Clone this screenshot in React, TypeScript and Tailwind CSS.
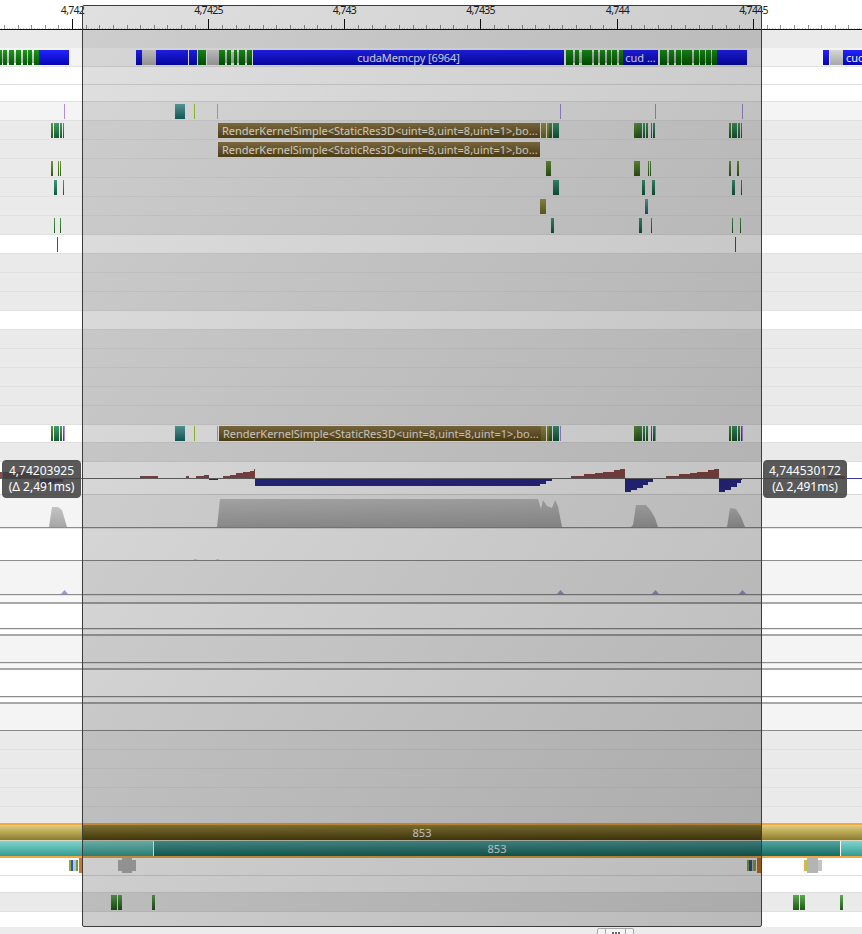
import type { ReactElement, ReactNode } from "react";

const font = "font-['Noto_Sans','DejaVu_Sans',sans-serif]";

type Seg = [number, number, string];
const G = "bg-linear-to-b from-[#1c961c] to-[#005c00]";
const B = "bg-linear-to-b from-[#2222ff] to-[#0505b4]";
const Y = "bg-linear-to-b from-[#d6d6d6] to-[#a8a8a8]";
const DG = "bg-linear-to-b from-[#4f9a4f] to-[#1f5a1f]";
const LG = "bg-linear-to-b from-[#5fa855] to-[#1f5a14]";
const OG = "bg-linear-to-b from-[#6f9a3c] to-[#2f5a14]";
const TL = "bg-linear-to-b from-[#3f9a7c] to-[#0d5a3a]";
const OL = "bg-linear-to-b from-[#a09a4c] to-[#6a6a1e]";
const TQ = "bg-linear-to-b from-[#5fa9a9] to-[#0f6666]";
const LM = "bg-[#a6cf3c]";
const PU = "bg-[#a98fdc]";

function greens(ranges: [number, number][]): Seg[] {
  return ranges.map(([a, b]) => [a, b - a, G] as Seg);
}

const topBar: Seg[] = [
  ...greens([[0, 2], [3, 7], [9, 14], [16, 21], [23, 27], [28, 32], [34, 39]]),
  [39, 30, B],
  [136, 6, B], [142, 14, Y], [156, 32, B], [189, 8, B],
  ...greens([[198, 206], [219, 225], [227, 231], [234, 237], [239, 245], [247, 252]]),
  [207, 12, Y],
  [253, 311, B],
  ...greens([[566, 573], [575, 579], [582, 587], [587, 592], [594, 598], [600, 605], [607, 611], [612, 617], [619, 623]]),
  [623, 35, B],
  ...greens([[660, 667], [669, 674], [676, 681], [682, 692], [694, 699], [700, 705], [706, 711], [712, 717]]),
  [717, 30, B],
  [823, 6, B], [830, 14, Y], [843, 19, B],
];

const burst = (x: number): Seg[] => [
  [x, 2, DG], [x + 3, 2, DG], [x + 5, 1, TL], [x + 6, 2, TL], [x + 9, 2, DG], [x + 12, 1, TL],
];

const burstB: Seg[] = [
  [634, 3, OG], [637, 1, TL], [638, 4, DG], [643, 2, TL], [646, 2, DG], [651, 1, DG], [653, 2, TL],
];

const row121: Seg[] = [
  ...burst(51),
  [541, 5, OL], [547, 2, OL], [549, 3, DG], [553, 6, TL],
  ...burstB,
  ...burst(729),
];

type Row = { h: number; bg: string; line: string; items?: Seg[]; label?: boolean };
const E = "bg-[#eaeaea]";
const F = "bg-[#f4f4f4]";
const W = "bg-white";
const L = "border-[#e0e0e0]";

const rows: Row[] = [
  { h: 18, bg: E, line: "border-[#eaeaea]" },
  { h: 19, bg: F, line: L, items: topBar },
  { h: 18, bg: W, line: L },
  { h: 17, bg: W, line: L },
  { h: 19, bg: F, line: L, items: [[64, 1, PU], [175, 10, TQ], [194, 1, LM], [217, 1, LM], [560, 1, PU], [655, 1, PU], [742, 1, PU]] },
  { h: 19, bg: E, line: L, items: row121, label: true },
  { h: 19, bg: E, line: L, label: true },
  { h: 19, bg: E, line: L, items: [[51, 2, OG], [58, 1, OG], [60, 1, OG], [546, 5, OG], [634, 6, OG], [648, 1, OG], [650, 1, DG], [729, 2, OG], [737, 2, OG]] },
  { h: 19, bg: E, line: L, items: [[54, 3, TL], [63, 1, TL], [553, 6, TL], [642, 3, TL], [652, 3, TL], [732, 3, TL], [741, 1, TL]] },
  { h: 19, bg: E, line: L, items: [[540, 6, OL], [645, 3, TQ]] },
  { h: 19, bg: E, line: L, items: [[54, 1, DG], [60, 1, DG], [551, 3, TL], [639, 3, TL], [651, 1, DG], [732, 1, DG], [740, 1, DG]] },
  { h: 19, bg: W, line: L, items: [[57, 1, "bg-[#2f5f5f]"], [735, 1, "bg-[#2f5f5f]"]] },
  { h: 19, bg: E, line: L },
  { h: 19, bg: E, line: L },
  { h: 19, bg: E, line: L },
  { h: 19, bg: W, line: L },
  { h: 19, bg: E, line: L },
  { h: 19, bg: E, line: L },
  { h: 19, bg: E, line: L },
  { h: 19, bg: E, line: L },
  { h: 19, bg: E, line: L },
];

const lowerEventRow: Seg[] = [...row121, [64, 1, PU], [560, 1, PU], [655, 1, PU], [742, 1, PU], [175, 10, TQ], [194, 1, LM], [217, 1, LM]];

function Items({ items, top = "top-[2px]" }: { items: Seg[]; top?: string }) {
  return (
    <>
      {items.map(([x, w, c], i) => (
        <div key={i} className={`absolute h-[15px] ${top} ${c}`} style={{ left: x, width: w }} />
      ))}
    </>
  );
}

function Kernel({ left = 218, top = "top-[2px]" }: { left?: number; top?: string }) {
  return (
    <div
      className={`absolute flex h-[15px] w-[322px] items-center overflow-hidden whitespace-nowrap bg-linear-to-b from-[#917a48] to-[#5a4818] pl-[4px] text-[11px] leading-none text-[#f2eee0] ${top} ${font}`}
      style={{ left }}
    >
      RenderKernelSimple&lt;StaticRes3D&lt;uint=8,uint=8,uint=1&gt;,bo...
    </div>
  );
}

function Ruler() {
  const ticks: ReactElement[] = [];
  for (let i = 0; i < 320; i++) {
    const x = Math.floor(-9.12 + i * 2.724);
    const isMajor = i % 50 === 30;
    const h = isMajor ? 0 : i % 5 === 0 ? 4 : 1;
    if (h && x >= 0) ticks.push(<rect key={i} x={x} y={29 - h} width="1" height={h} fill={h === 4 ? "#909090" : "#c4c4c4"} />);
  }
  const majors = [72, 208, 344, 480, 617, 753];
  const labels = ["4,742", "4,7425", "4,743", "4,7435", "4,744", "4,7445"];
  return (
    <div className="relative h-[30px] w-full bg-white">
      <svg width="862" height="30" className="absolute inset-0">
        {ticks}
        {majors.map((x) => (
          <rect key={x} x={x} y="19" width="1" height="10" fill="#111" />
        ))}
        <rect x="0" y="29" width="862" height="1" fill="#111" />
      </svg>
      {labels.map((t, i) => (
        <div
          key={t}
          className={`absolute top-[4px] w-[60px] -translate-x-1/2 text-center text-[10.5px] leading-[13px] tracking-[-0.7px] text-[#222] ${font}`}
          style={{ left: majors[i] + 0.5 }}
        >
          {t}
        </div>
      ))}
    </div>
  );
}

function SimpleRow({ h, bg, line, children }: { h: number; bg: string; line: string; children?: ReactNode }) {
  return (
    <div className={`relative w-full border-b ${bg} ${line}`} style={{ height: h }}>
      {children}
    </div>
  );
}

function steps(pts: [number, number][], base: number) {
  let d = `M${pts[0][0]} ${base}`;
  for (let i = 0; i < pts.length - 1; i++) {
    d += `L${pts[i][0]} ${pts[i][1]}L${pts[i + 1][0]} ${pts[i][1]}`;
  }
  d += `L${pts[pts.length - 1][0]} ${base}Z`;
  return d;
}

function BalanceChart() {
  const red = "#8c4a4a";
  const blue = "#2a2a8c";
  const A = 17;
  return (
    <svg width="862" height="33" className="absolute inset-0">
      <g transform="translate(0,-1)">
        <path d={steps([[0, 11], [40, 11]], A)} fill={red} />
        <path d={steps([[40, 25], [48, 23], [55, 21], [63, 19]], A)} fill={blue} />
        <path d={steps([[140, 15], [158, 15]], A)} fill={red} />
        <path d={steps([[158, 18], [175, 18]], A)} fill={blue} />
        <path d={steps([[186, 15], [189, 15]], A)} fill={red} />
        <path d={steps([[189, 18], [195, 18]], A)} fill={blue} />
        <path d={steps([[196, 15], [204, 14], [209, 14]], A)} fill={red} />
        <path d={steps([[209, 19], [218, 19]], A)} fill={blue} />
        <path d={steps([[223, 15], [230, 14], [236, 12], [243, 11], [250, 10], [254, 8], [255, 8]], A)} fill={red} />
        <path d={steps([[255, 25], [540, 23], [546, 20], [552, 18], [559, 18]], A)} fill={blue} />
        <path d={steps([[571, 15], [584, 13], [595, 12], [603, 11], [614, 9], [620, 8], [625, 8]], A)} fill={red} />
        <path d={steps([[625, 31], [631, 29], [637, 27], [643, 24], [648, 21], [653, 21]], A)} fill={blue} />
        <path d={steps([[666, 15], [679, 13], [690, 12], [697, 11], [708, 9], [714, 8], [719, 8]], A)} fill={red} />
        <path d={steps([[719, 31], [725, 29], [731, 26], [737, 22], [741, 19], [742, 19]], A)} fill={blue} />
        <path d={steps([[827, 15], [845, 15]], A)} fill={red} />
      </g>
      <rect x="0" y={A - 1} width="845" height="1" fill="#6a6a6a" />
      <rect x="845" y={A - 1} width="17" height="1" fill="#3a3a9c" />
    </svg>
  );
}

function AreaChart() {
  return (
    <svg width="862" height="34" className="absolute inset-0">
      <defs>
        <linearGradient id="ar" x1="0" y1="0" x2="0" y2="1">
          <stop offset="0" stopColor="#c4c4c4" />
          <stop offset="1" stopColor="#a6a6a6" />
        </linearGradient>
      </defs>
      <polygon fill="url(#ar)" points="49,32 52,12 58,12 62,15 64,22 67,32" />
      <polygon fill="url(#ar)" points="217,32 220,4 538,4 541,14 543,5 547,11 552,13 555,5 558,11 562,32" />
      <polygon fill="url(#ar)" points="631,32 633,30 636,10 646,10 651,16 655,23 658,32" />
      <polygon fill="url(#ar)" points="727,32 730,13 736,14 741,22 745,32" />
    </svg>
  );
}

function Bumps({ xs, color, base, rise, half }: { xs: number[]; color: string; base: number; rise: number; half: number }) {
  return (
    <svg width="862" height="34" className="absolute inset-0">
      {xs.map((x) => (
        <polygon key={x} points={`${x - half},${base} ${x + 0.5},${base - rise} ${x + half + 1},${base}`} fill={color} />
      ))}
    </svg>
  );
}

function DoubleBlock({ first, second, firstH, secondH }: { first: string; second: string; firstH: number; secondH: number }) {
  return (
    <>
      <div className={`w-full border-t border-[#e4e4e4] ${first}`} style={{ height: firstH }} />
      <div className="h-[2px] w-full bg-[#a8a8a8]" />
      <div className={`w-full border-b border-[#8c8c8c] ${second}`} style={{ height: secondH }} />
    </>
  );
}

function Tooltip({ text, className }: { text: string; className: string }) {
  return (
    <div
      className={`absolute top-[460px] flex h-[38px] flex-col items-center justify-center rounded-[4px] border border-[#555] bg-[rgba(60,60,60,0.85)] text-[12px] leading-[16px] text-white ${font} ${className}`}
    >
      <div>{text}</div>
      <div>(Δ 2,491ms)</div>
    </div>
  );
}

const goldLight = "bg-linear-to-b from-[#e0d080] to-[#8c7c28]";
const tealLight = "bg-linear-to-b from-[#7fd4cc] to-[#2f9c94]";

export default function App() {
  return (
    <div className="relative h-[934px] w-[862px] overflow-hidden bg-[#ececec]">
      <Ruler />
      {rows.map((r, i) => (
        <SimpleRow key={i} h={r.h} bg={r.bg} line={r.line}>
          {i === 1 && (
            <>
              <div className={`absolute left-0 top-[4px] h-[11px] w-[39px] ${Y}`} />
              <div className={`absolute left-[219px] top-[4px] h-[11px] w-[33px] ${Y}`} />
              <div className={`absolute left-[566px] top-[4px] h-[11px] w-[57px] ${Y}`} />
              <div className={`absolute left-[660px] top-[4px] h-[11px] w-[57px] ${Y}`} />
            </>
          )}
          {r.items && <Items items={r.items} />}
          {i === 1 && (
            <>
              <div className={`absolute left-[253px] top-[2px] flex h-[15px] w-[311px] items-center justify-center text-[11px] leading-none tracking-[-0.1px] text-[#f0f0ff] ${font}`}>
                cudaMemcpy [6964]
              </div>
              <div className={`absolute left-[623px] top-[2px] flex h-[15px] w-[35px] items-center justify-center text-[11px] leading-none text-[#f0f0ff] ${font}`}>
                cud ...
              </div>
              <div className={`absolute left-[846px] top-[2px] flex h-[15px] w-[16px] items-center overflow-hidden text-[11px] leading-none text-[#f0f0ff] ${font}`}>
                cuc
              </div>
            </>
          )}
          {r.label && <Kernel />}
        </SimpleRow>
      ))}
      <SimpleRow h={18} bg={W} line={L}>
        <Items items={lowerEventRow} top="top-[1px]" />
        <Kernel left={219} top="top-[1px]" />
      </SimpleRow>
      <SimpleRow h={19} bg={E} line={L} />
      <SimpleRow h={33} bg={W} line="border-[#d8d8d8]">
        <BalanceChart />
      </SimpleRow>
      <div className={`relative h-[33px] w-full border-b border-[#8c8c8c] ${F}`}>
        <AreaChart />
      </div>
      <div className={`relative h-[33px] w-full border-t border-b border-t-[#e4e4e4] border-b-[#8c8c8c] ${W}`}>
        <Bumps xs={[195, 217]} color="#c8d8a8" base={31} rise={1} half={2} />
      </div>
      <div className={`relative h-[34px] w-full border-b border-[#8c8c8c] ${F}`}>
        <Bumps xs={[64, 560, 655, 742]} color="#a98fdc" base={33} rise={4} half={3} />
      </div>
      <DoubleBlock first="bg-[#f8f8f8]" second="bg-white" firstH={7} secondH={25} />
      <DoubleBlock first="bg-white" second="bg-[#f4f4f4]" firstH={5} secondH={27} />
      <DoubleBlock first="bg-[#f8f8f8]" second="bg-white" firstH={5} secondH={27} />
      <DoubleBlock first="bg-white" second="bg-[#f4f4f4]" firstH={5} secondH={27} />
      <SimpleRow h={19} bg={E} line={L} />
      <SimpleRow h={19} bg={E} line={L} />
      <SimpleRow h={19} bg={E} line={L} />
      <SimpleRow h={19} bg={E} line={L} />
      <div className={`h-[16px] w-full ${E}`} />
      <div className="h-[2px] w-full bg-[#f0a840]" />
      <div className="flex h-[15px] w-full">
        <div className={`h-full w-[82px] ${goldLight}`} />
        <div className={`flex h-full w-[680px] items-center justify-center bg-linear-to-b from-[#9a8a3c] to-[#50440d] text-[11px] leading-none text-[#f4f4f4] ${font}`}>
          853
        </div>
        <div className={`h-full flex-1 ${goldLight}`} />
      </div>
      <div className="h-[1px] w-full bg-[#d8d8c8]" />
      <div className="flex h-[15px] w-full">
        <div className={`h-full w-[153px] ${tealLight}`} />
        <div className="h-full w-[1px] bg-white" />
        <div className={`flex h-full w-[686px] items-center justify-center bg-linear-to-b from-[#52a4a0] to-[#0f6c64] text-[11px] leading-none text-[#f4f4f4] ${font}`}>
          853
        </div>
        <div className="h-full w-[1px] bg-white" />
        <div className={`h-full flex-1 ${tealLight}`} />
      </div>
      <div className="h-[2px] w-full bg-[#f0a840]" />
      <SimpleRow h={18} bg={W} line={L}>
        <svg width="862" height="17" className="absolute inset-0">
          <rect x="69" y="2" width="2" height="11" fill="#8cab3c" />
          <rect x="71" y="2" width="2" height="11" fill="#2f52c8" />
          <rect x="73" y="2" width="3" height="11" fill="#b8c4d8" />
          <rect x="76" y="2" width="2" height="11" fill="#6aa03c" />
          <rect x="79" y="0" width="3" height="15" fill="#d0762c" />
          <rect x="118" y="2" width="18" height="11" fill="#b4b4b4" />
          <rect x="122" y="0" width="10" height="15" fill="#b4b4b4" />
          <rect x="747" y="2" width="2" height="11" fill="#8cab3c" />
          <rect x="749" y="2" width="3" height="11" fill="#2f52a8" />
          <rect x="752" y="2" width="1" height="11" fill="#c4c4c4" />
          <rect x="753" y="2" width="3" height="11" fill="#8cab3c" />
          <rect x="757" y="0" width="5" height="15" fill="#d0762c" />
          <rect x="804" y="2" width="2" height="11" fill="#f0a860" />
          <rect x="806" y="2" width="1" height="11" fill="#a6cf3c" />
          <rect x="807" y="2" width="15" height="11" fill="#c4c4c4" />
          <rect x="807" y="0" width="11" height="15" fill="#b4b4b4" />
        </svg>
      </SimpleRow>
      <SimpleRow h={17} bg={W} line={L} />
      <SimpleRow h={19} bg={E} line={L}>
        <Items
          items={[
            [111, 5, LG], [116, 1, LG], [118, 4, LG], [152, 3, LG],
            [793, 6, LG], [800, 5, LG], [840, 3, LG],
          ]}
        />
      </SimpleRow>
      <div className="h-[15px] w-full bg-white" />
      <div className="relative h-[8px] w-full bg-[#ececec]">
        <div className="absolute left-[597px] top-[1px] flex h-[8px] w-[37px] rounded-t-[2px] border border-[#a8a8a8] bg-[#f4f4f4]">
          <div className="w-[8px] border-r border-[#a8a8a8]" />
          <div className="flex flex-1 justify-center gap-[1px] pt-[3px]">
            <div className="h-[3px] w-[2px] bg-[#666]" />
            <div className="h-[3px] w-[2px] bg-[#666]" />
            <div className="h-[3px] w-[2px] bg-[#666]" />
          </div>
          <div className="w-[8px] border-l border-[#a8a8a8]" />
        </div>
      </div>

      <div className="pointer-events-none absolute left-[82px] top-[5px] h-[922px] w-[680px] rounded-[2px] border border-[#3c3c3c] bg-linear-to-br from-[rgba(0,0,0,0.12)] to-[rgba(0,0,0,0.27)]" />
      <Tooltip text="4,74203925" className="left-[2px] w-[79px]" />
      <Tooltip text="4,744530172" className="left-[763px] w-[84px]" />
    </div>
  );
}
